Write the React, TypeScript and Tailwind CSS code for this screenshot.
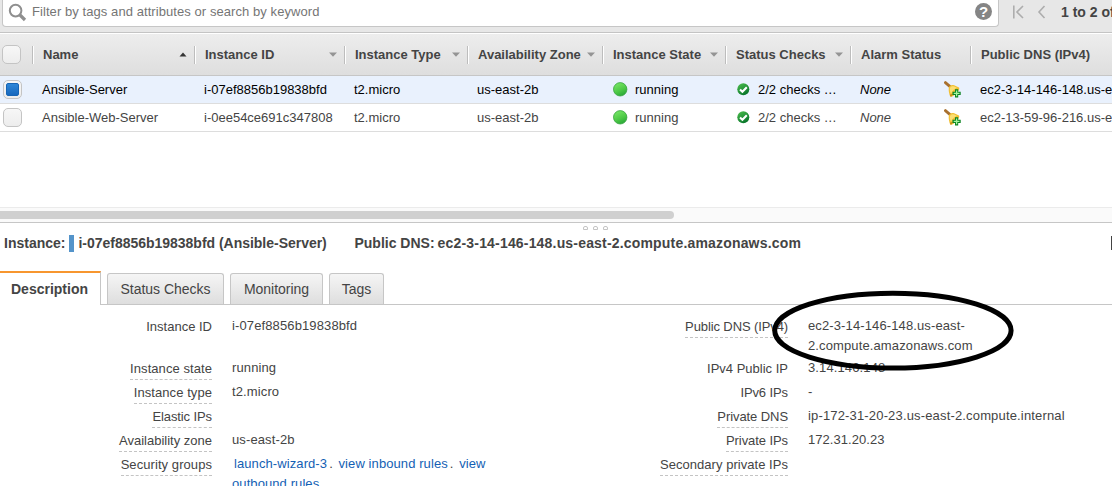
import type { ReactNode } from "react";

const Sep = () => <span className="h-[18px] w-[2px] shrink-0 border-l border-[#bdbdbd] bg-white" />;

const Arrow = ({ up = false }: { up?: boolean }) => (
  <svg className="mr-[7px] shrink-0" width="8" height="5" viewBox="0 0 8 5">
    <path d={up ? "M0.5 4.5L4 0.5L7.5 4.5Z" : "M0 0.5H8L4 4.8Z"} fill={up ? "#333" : "#949494"} />
  </svg>
);

function HeadCell({ w, label, sort }: { w: string; label: string; sort?: "up" | "down" }) {
  return (
    <div className={`flex shrink-0 items-center ${w}`}>
      <Sep />
      <span className="ml-[9px] flex-1 whitespace-nowrap font-bold text-[#444]">{label}</span>
      {sort && <Arrow up={sort === "up"} />}
    </div>
  );
}

function Box({ checked = false }: { checked?: boolean }) {
  return (
    <span className="flex h-[19px] w-[19px] shrink-0 items-center justify-center rounded-[5px] border border-[#c4c4c4] bg-linear-to-b from-[#f7f7f7] to-[#ededed]">
      {checked && <span className="h-[13px] w-[13px] rounded-[2px] border border-[#1765b5] bg-linear-to-b from-[#2f87d8] to-[#1768bd]" />}
    </span>
  );
}

const GreenBall = () => (
  <svg className="mr-[7px] shrink-0" width="15" height="15" viewBox="0 0 15 15">
    <defs>
      <linearGradient id="ball" x1="0.2" y1="0" x2="0.7" y2="1">
        <stop offset="0" stopColor="#7ae868" />
        <stop offset="0.6" stopColor="#4cc845" />
        <stop offset="1" stopColor="#26a536" />
      </linearGradient>
    </defs>
    <circle cx="7.2" cy="7.3" r="6.7" fill="url(#ball)" stroke="#37a340" strokeWidth="0.8" />
  </svg>
);

const Check = () => (
  <svg className="mr-[8px] shrink-0" width="13" height="13" viewBox="0 0 13 13">
    <defs>
      <linearGradient id="chk" x1="0" y1="0" x2="0.6" y2="1">
        <stop offset="0" stopColor="#4fc04f" />
        <stop offset="1" stopColor="#08752a" />
      </linearGradient>
    </defs>
    <circle cx="6.3" cy="6.3" r="6" fill="url(#chk)" />
    <path d="M3 6.5L5.4 8.8L9.8 4.3" fill="none" stroke="#fff" strokeWidth="2.1" />
  </svg>
);

const Bell = () => (
  <svg className="shrink-0" width="17" height="17" viewBox="0 0 17 17">
    <path d="M1.4 1.6L5.8 5.4" stroke="#a8702f" strokeWidth="2.8" strokeLinecap="round" />
    <path d="M4.8 6.8C5.2 4.4 7.6 3.4 10.2 4.2L15 6.6C16 8 14.6 10 12.4 12.2C10 14.6 7.4 16.4 6.2 15.4C5 13 4.4 9.2 4.8 6.8Z" fill="#f2c034" />
    <path d="M6 7C6.8 5.2 8.6 4.8 10.4 5.4L12.8 6.8C10.6 7.6 8.2 10 7 12.8C6 10.6 5.6 8.6 6 7Z" fill="#fbdf73" />
    <path d="M5.8 13.8C7 12.6 8.2 12.8 9 13.2L7.2 15.8C6.4 15.8 6 15 5.8 13.8Z" fill="#c98f1d" />
    <path d="M11 8.3h3.2v2.5h2.5v3.2h-2.5v2.5H11V14H8.5v-3.2H11z" fill="#0a8321" />
    <path d="M12.6 9.5v5.8M9.7 12.4h5.8" stroke="#a5f5a0" strokeWidth="1.3" />
  </svg>
);

function Row({ name, id, dns, selected = false }: { name: string; id: string; dns: string; selected?: boolean }) {
  return (
    <div className={`flex h-[28px] items-center whitespace-nowrap border-b border-[#ddd] ${selected ? "bg-[#e9f1fd] text-black" : "text-[#444]"}`}>
      <div className="flex w-[42px] shrink-0 pl-[3px]"><Box checked={selected} /></div>
      <div className="w-[162px] shrink-0">{name}</div>
      <div className="w-[150px] shrink-0">{id}</div>
      <div className="w-[123px] shrink-0">t2.micro</div>
      <div className="w-[136px] shrink-0">us-east-2b</div>
      <div className="flex w-[124px] shrink-0 items-center"><GreenBall />running</div>
      <div className="flex w-[123px] shrink-0 items-center"><Check />2/2 checks …</div>
      <div className="w-[84px] shrink-0 italic">None</div>
      <div className="w-[36px] shrink-0"><Bell /></div>
      <div className="shrink-0">{dns}</div>
    </div>
  );
}

function Tab({ children, w }: { children: ReactNode; w: string }) {
  return (
    <div className={`mr-[6px] flex h-[31px] items-center justify-center rounded-t-[3px] border border-b-0 border-[#c6c6c6] bg-linear-to-b from-[#f5f5f5] to-[#dedede] text-[14px] tracking-[-0.02px] text-[#444] ${w}`}>
      {children}
    </div>
  );
}

function Field({ label, plain = false, h, tracking = "", children }: { label: string; plain?: boolean; h: string; tracking?: string; children?: ReactNode }) {
  return (
    <div className={`flex items-start ${h}`}>
      <div className="flex w-[212px] shrink-0 justify-end">
        <span className={`h-[22px] whitespace-nowrap border-b border-dashed leading-[21px] ${tracking} ${plain ? "border-transparent" : "border-[#c4c4c4]"}`}>{label}</span>
      </div>
      <div className="ml-[20px] leading-[20px] tracking-[0.12px]">{children}</div>
    </div>
  );
}

export default function App() {
  return (
    <div className="relative h-[486px] w-[1112px] overflow-hidden bg-white font-['Liberation_Sans',Arial,sans-serif] text-[13px] text-[#444]">
      <div className="flex h-[33px] items-start border-b border-[#c4c4c4] bg-[#e7e7e7]">
        <div className="ml-[2px] flex h-[27px] w-[997px] shrink-0 items-center rounded-b-[4px] border border-t-0 border-[#c6c6c6] bg-white">
          <svg className="ml-[5px] mt-[-2px]" width="19" height="19" viewBox="0 0 19 19" fill="none" stroke="#8f8f8f">
            <circle cx="7.6" cy="7.6" r="5.8" strokeWidth="2" />
            <path d="M12 12L17 17" strokeWidth="3.2" />
          </svg>
          <span className="ml-[5px] mt-[-3px] flex-1 tracking-[0.07px] text-[#757575]">Filter by tags and attributes or search by keyword</span>
          <span className="mt-[-3px] mr-[6px] flex h-[17px] w-[17px] items-center justify-center rounded-full bg-[#858585] text-[15px] leading-none font-bold text-white">?</span>
        </div>
        <svg className="ml-[13px] mt-[5px] shrink-0" width="36" height="14" viewBox="0 0 36 14" fill="none" stroke="#adadad" strokeWidth="1.6">
          <path d="M1.8 0.5V13.5M11 1L5 7L11 13M32.5 1L27 7L32.5 13" />
        </svg>
        <span className="ml-[13px] mt-[2px] whitespace-nowrap text-[14px] leading-[20px] font-bold">1 to 2 of 2</span>
      </div>

      <div className="flex h-[43px] items-center border-t border-b border-t-white border-b-[#c6c6c6] bg-linear-to-b from-[#ededed] to-[#dedede]">
        <div className="flex w-[32px] shrink-0 pl-[2px]"><Box /></div>
        <HeadCell w="w-[162px]" label="Name" sort="up" />
        <HeadCell w="w-[150px]" label="Instance ID" sort="down" />
        <HeadCell w="w-[123px]" label="Instance Type" sort="down" />
        <HeadCell w="w-[135px]" label="Availability Zone" sort="down" />
        <HeadCell w="w-[123px]" label="Instance State" sort="down" />
        <HeadCell w="w-[125px]" label="Status Checks" sort="down" />
        <HeadCell w="w-[120px]" label="Alarm Status" />
        <HeadCell w="w-[143px]" label="Public DNS (IPv4)" />
      </div>
      <Row selected name="Ansible-Server" id="i-07ef8856b19838bfd" dns="ec2-3-14-146-148.us-east-2" />
      <Row name="Ansible-Web-Server" id="i-0ee54ce691c347808" dns="ec2-13-59-96-216.us-east-2" />

      <div className="mt-[75px] flex h-[16px] items-center border-t border-b border-t-[#ebebeb] border-b-[#c6c6c6] bg-[#fafafa]">
        <div className="h-[8px] w-[674px] rounded-r-full bg-[#d0d0d0]" />
      </div>
      <div className="flex h-[9px] items-start gap-[5px] pt-[3px] pl-[583px]">
        <span className="h-[4px] w-[5px] rounded-t-[2px] border border-[#c4c4c4]" />
        <span className="h-[4px] w-[5px] rounded-t-[2px] border border-[#c4c4c4]" />
        <span className="h-[4px] w-[5px] rounded-t-[2px] border border-[#c4c4c4]" />
      </div>
      <div className="flex h-[22px] items-center whitespace-nowrap pl-[4px] text-[14px] font-bold">
        <span>Instance:</span>
        <span className="ml-[4px] h-[17px] w-[5px] bg-[#5494ca]" />
        <span className="ml-[4px] w-[276px] tracking-[-0.02px]">i-07ef8856b19838bfd (Ansible-Server)</span>
        <span>Public DNS:</span>
        <span className="ml-[3px] tracking-[0.18px]">ec2-3-14-146-148.us-east-2.compute.amazonaws.com</span>
        <span className="ml-auto h-[14px] w-[1px] bg-[#444]" />
      </div>

      <div className="mt-[17px] flex h-[34px] items-end">
        <div className="flex h-[34px] w-[101px] shrink-0 items-center border-t-2 border-r border-t-[#f7962f] border-r-[#c6c6c6] pl-[11px] text-[14px] font-bold">Description</div>
        <div className="flex h-[34px] flex-1 items-end border-b border-[#c6c6c6] pl-[6px]">
          <Tab w="w-[117px]">Status Checks</Tab>
          <Tab w="w-[93px]">Monitoring</Tab>
          <Tab w="w-[55px]">Tags</Tab>
        </div>
      </div>

      <div className="flex pt-[11px]">
        <div className="w-[576px] shrink-0">
          <Field label="Instance ID" plain h="h-[42px]">i-07ef8856b19838bfd</Field>
          <Field label="Instance state" h="h-[24px]" tracking="tracking-[0.07px]">running</Field>
          <Field label="Instance type" h="h-[24px]" tracking="tracking-[0.07px]">t2.micro</Field>
          <Field label="Elastic IPs" h="h-[24px]" tracking="tracking-[-0.1px]" />
          <Field label="Availability zone" h="h-[24px]">us-east-2b</Field>
          <Field label="Security groups" h="h-[40px]" tracking="tracking-[0.07px]">
            <div className="whitespace-nowrap tracking-[0.09px]">
              <span className="ml-[2px] text-[#145fb4]">launch-wizard-3</span><span className="mx-[2px]">.</span>{" "}
              <span className="text-[#145fb4]">view inbound rules</span><span className="mx-[2px]">.</span>{" "}
              <span className="text-[#145fb4]">view</span>
              <br />
              <span className="text-[#145fb4]">outbound rules</span>
            </div>
          </Field>
        </div>
        <div className="w-[536px] shrink-0">
          <Field label="Public DNS (IPv4)" h="h-[42px]" tracking="tracking-[-0.11px]">
            ec2-3-14-146-148.us-east-<br />2.compute.amazonaws.com
          </Field>
          <Field label="IPv4 Public IP" plain h="h-[24px]">3.14.146.148</Field>
          <Field label="IPv6 IPs" plain h="h-[24px]" tracking="tracking-[-0.1px]">-</Field>
          <Field label="Private DNS" h="h-[24px]" tracking="tracking-[-0.08px]">
            <span className="tracking-[0.16px]">ip-172-31-20-23.us-east-2.compute.internal</span>
          </Field>
          <Field label="Private IPs" h="h-[24px]" tracking="tracking-[-0.08px]"><span className="tracking-[0.05px]">172.31.20.23</span></Field>
          <Field label="Secondary private IPs" h="h-[24px]" tracking="tracking-[0.04px]" />
        </div>
      </div>

      <svg className="pointer-events-none absolute top-[288px] left-[770px]" width="246" height="86" viewBox="0 0 246 86">
        <ellipse cx="122.9" cy="42.6" rx="118.2" ry="37.4" fill="none" stroke="#000" strokeWidth="5" />
      </svg>
    </div>
  );
}
